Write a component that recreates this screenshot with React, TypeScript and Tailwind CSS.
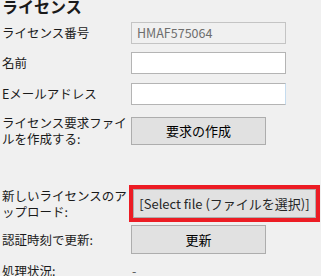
import React from "react";

const font = { fontFamily: '"Noto Sans CJK JP", "Noto Sans", sans-serif' };

export default function App() {
  return (
    <div
      className="w-[321px] h-[276px] overflow-hidden bg-[#f0f0f0] pl-[2px] text-[12.5px] leading-[16px] text-[#1a1a1a]"
      style={font}
    >
      <div className="mt-[-2px] h-[16px] text-[16px] font-bold leading-[16px]">ライセンス</div>

      <div className="mt-[8px] flex items-center">
        <div className="w-[129px]">ライセンス番号</div>
        <div className="flex h-[22px] w-[155px] items-center border border-[#c4c4c4] bg-[#f0f0f0] pl-[5px] text-[12.5px] text-[#6d6d6d]">
          HMAF575064
        </div>
      </div>

      <div className="mt-[8px] flex items-center">
        <div className="w-[129px]">名前</div>
        <div className="h-[22px] w-[155px] border border-[#b4b4b4] bg-white" />
      </div>

      <div className="mt-[9px] flex items-center">
        <div className="w-[129px]">Eメールアドレス</div>
        <div className="h-[22px] w-[155px] border border-[#b4b4b4] border-r-[#c5dcef] bg-white" />
      </div>

      <div className="mt-[10px] flex items-center">
        <div className="w-[129px]">
          ライセンス要求ファイ
          <br />
          ルを作成する:
        </div>
        <div className="flex h-[28px] w-[135px] items-center justify-center border border-[#adadad] bg-[#e1e1e1] text-[13px] text-black">
          要求の作成
        </div>
      </div>

      <div className="mt-[38px] flex items-center">
        <div className="w-[127px]">
          新しいライセンスのア
          <br />
          ップロード:
        </div>
        <div className="border-[4px] border-[#ec1c24]">
          <div className="flex h-[29px] w-[183px] items-center justify-center border border-[#adadad] bg-[#e1e1e1] text-[13px] text-[#262626]">
            [Select file (ファイルを選択)]
          </div>
        </div>
      </div>

      <div className="mt-[3px] flex items-center">
        <div className="w-[129px]">認証時刻で更新:</div>
        <div className="flex h-[29px] w-[135px] items-center justify-center border border-[#adadad] bg-[#e1e1e1] text-[13px] text-black">
          更新
        </div>
      </div>

      <div className="mt-[9px] flex items-center">
        <div className="w-[129px]">処理状況:</div>
        <div className="pl-[1px] text-[#555]">-</div>
      </div>
    </div>
  );
}
